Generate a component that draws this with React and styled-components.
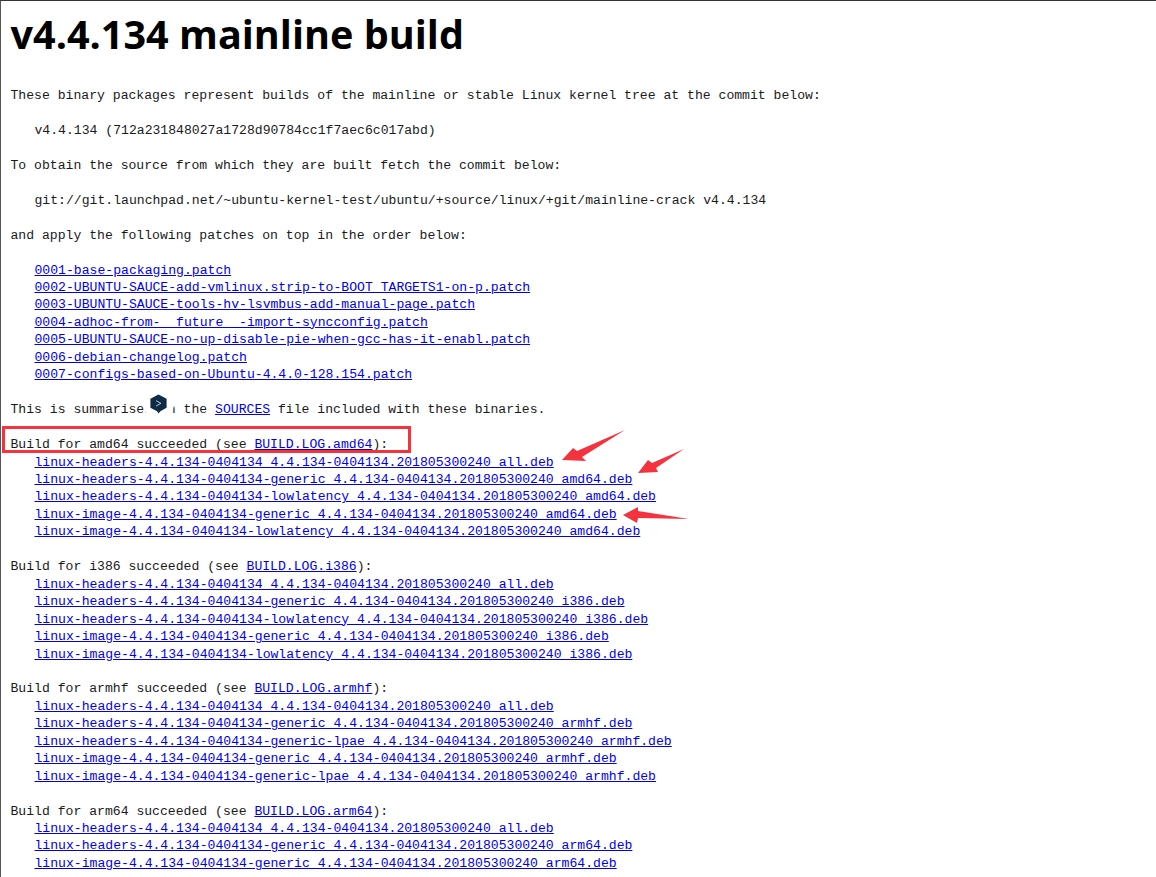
import styled, { createGlobalStyle } from 'styled-components';

const GlobalStyle = createGlobalStyle`
  html, body {
    margin: 0;
    padding: 0;
    background: #fff;
  }
`;

const patches = [
  '0001-base-packaging.patch',
  '0002-UBUNTU-SAUCE-add-vmlinux.strip-to-BOOT_TARGETS1-on-p.patch',
  '0003-UBUNTU-SAUCE-tools-hv-lsvmbus-add-manual-page.patch',
  '0004-adhoc-from-__future__-import-syncconfig.patch',
  '0005-UBUNTU-SAUCE-no-up-disable-pie-when-gcc-has-it-enabl.patch',
  '0006-debian-changelog.patch',
  '0007-configs-based-on-Ubuntu-4.4.0-128.154.patch',
];

const v = '4.4.134-0404134';
const d = `${v}.201805300240`;

const builds = [
  {
    arch: 'amd64',
    files: [
      `linux-headers-${v}_${d}_all.deb`,
      `linux-headers-${v}-generic_${d}_amd64.deb`,
      `linux-headers-${v}-lowlatency_${d}_amd64.deb`,
      `linux-image-${v}-generic_${d}_amd64.deb`,
      `linux-image-${v}-lowlatency_${d}_amd64.deb`,
    ],
  },
  {
    arch: 'i386',
    files: [
      `linux-headers-${v}_${d}_all.deb`,
      `linux-headers-${v}-generic_${d}_i386.deb`,
      `linux-headers-${v}-lowlatency_${d}_i386.deb`,
      `linux-image-${v}-generic_${d}_i386.deb`,
      `linux-image-${v}-lowlatency_${d}_i386.deb`,
    ],
  },
  {
    arch: 'armhf',
    files: [
      `linux-headers-${v}_${d}_all.deb`,
      `linux-headers-${v}-generic_${d}_armhf.deb`,
      `linux-headers-${v}-generic-lpae_${d}_armhf.deb`,
      `linux-image-${v}-generic_${d}_armhf.deb`,
      `linux-image-${v}-generic-lpae_${d}_armhf.deb`,
    ],
  },
  {
    arch: 'arm64',
    files: [
      `linux-headers-${v}_${d}_all.deb`,
      `linux-headers-${v}-generic_${d}_arm64.deb`,
      `linux-image-${v}-generic_${d}_arm64.deb`,
    ],
  },
];

const App = () => {
  return (
    <Page>
      <GlobalStyle />
      <Title>v4.4.134 mainline build</Title>
      <Listing>
        <Block>
          <Line>These binary packages represent builds of the mainline or stable Linux kernel tree at the commit below:</Line>
        </Block>
        <Block>
          <Line $indent>v4.4.134 (712a231848027a1728d90784cc1f7aec6c017abd)</Line>
        </Block>
        <Block>
          <Line>To obtain the source from which they are built fetch the commit below:</Line>
        </Block>
        <Block>
          <Line $indent>git://git.launchpad.net/~ubuntu-kernel-test/ubuntu/+source/linux/+git/mainline-crack v4.4.134</Line>
        </Block>
        <Block>
          <Line>and apply the following patches on top in the order below:</Line>
        </Block>
        <Block>
          {patches.map(name => (
            <Line $indent key={name}><a href="#">{name}</a></Line>
          ))}
        </Block>
        <Block>
          <Line>This is summarised in the <a href="#">SOURCES</a> file included with these binaries.</Line>
        </Block>
        {builds.map(build => (
          <Block key={build.arch}>
            <Line>Build for {build.arch} succeeded (see <a href="#">BUILD.LOG.{build.arch}</a>):</Line>
            {build.files.map(file => (
              <Line $indent key={file}><a href="#">{file}</a></Line>
            ))}
          </Block>
        ))}
      </Listing>

      <Badge>
        <svg width="19" height="20" viewBox="0 0 19 21">
          <path d="M9.5 0.5 L18 5 V14.5 L11.5 18 L9.5 20.5 L8 18.2 L1 14.5 V5 Z" fill="#0f2b46" />
          <path d="M7 7 L12 9.8 L7 12.6" fill="none" stroke="#c3d0da" strokeWidth="1" />
        </svg>
      </Badge>
      <HighlightBox />
      <Arrows width="1156" height="877" viewBox="0 0 1156 877">
        <path d="M562 460 L573 448 L577 451 L625 430 L582 457 L586 461 Z" />
        <path d="M638 473 L648 460 L652 463 L684 449 L656 468 L658 472 Z" />
        <path d="M623 515 L638 507 L638 511 L689 519 L638 518 L637 523 Z" />
      </Arrows>
    </Page>
  );
};

export default App;

const Page = styled.div`
  position: relative;
  box-sizing: border-box;
  width: 1156px;
  height: 877px;
  overflow: hidden;
  padding: 0 0 0 9.5px;
  border-top: 1px solid #333;
  border-left: 1px solid #555;
  color: #1a1a1a;
`;
const Title = styled.h1`
  margin: 0;
  height: 86px;
  font-family: "Open Sans", "Noto Sans", sans-serif;
  font-size: 39.6px;
  line-height: 66px;
  font-weight: 700;
  color: #000;
`;
const Listing = styled.div`
  display: flex;
  flex-direction: column;
  gap: 17.46px;
  font-family: "Liberation Mono", monospace;
  font-size: 13.12px;
  line-height: 17.46px;
`;
const Block = styled.div`
  display: flex;
  flex-direction: column;
`;
const Line = styled.div`
  white-space: pre;
  padding-left: ${props => (props.$indent ? '24px' : '0')};
  a {
    color: #0000ee;
    text-decoration: underline;
  }
`;
const Badge = styled.div`
  position: absolute;
  left: 142px;
  top: 387px;
  width: 31px;
  height: 31px;
  border-radius: 50%;
  background: #fff;
  display: flex;
  align-items: center;
  justify-content: center;
`;
const HighlightBox = styled.div`
  position: absolute;
  left: 1.3px;
  top: 425px;
  width: 403px;
  height: 20.5px;
  border: 3px solid #f5333f;
`;
const Arrows = styled.svg`
  position: absolute;
  left: -1px;
  top: -1px;
  pointer-events: none;
  path {
    fill: #f5333f;
  }
`;
